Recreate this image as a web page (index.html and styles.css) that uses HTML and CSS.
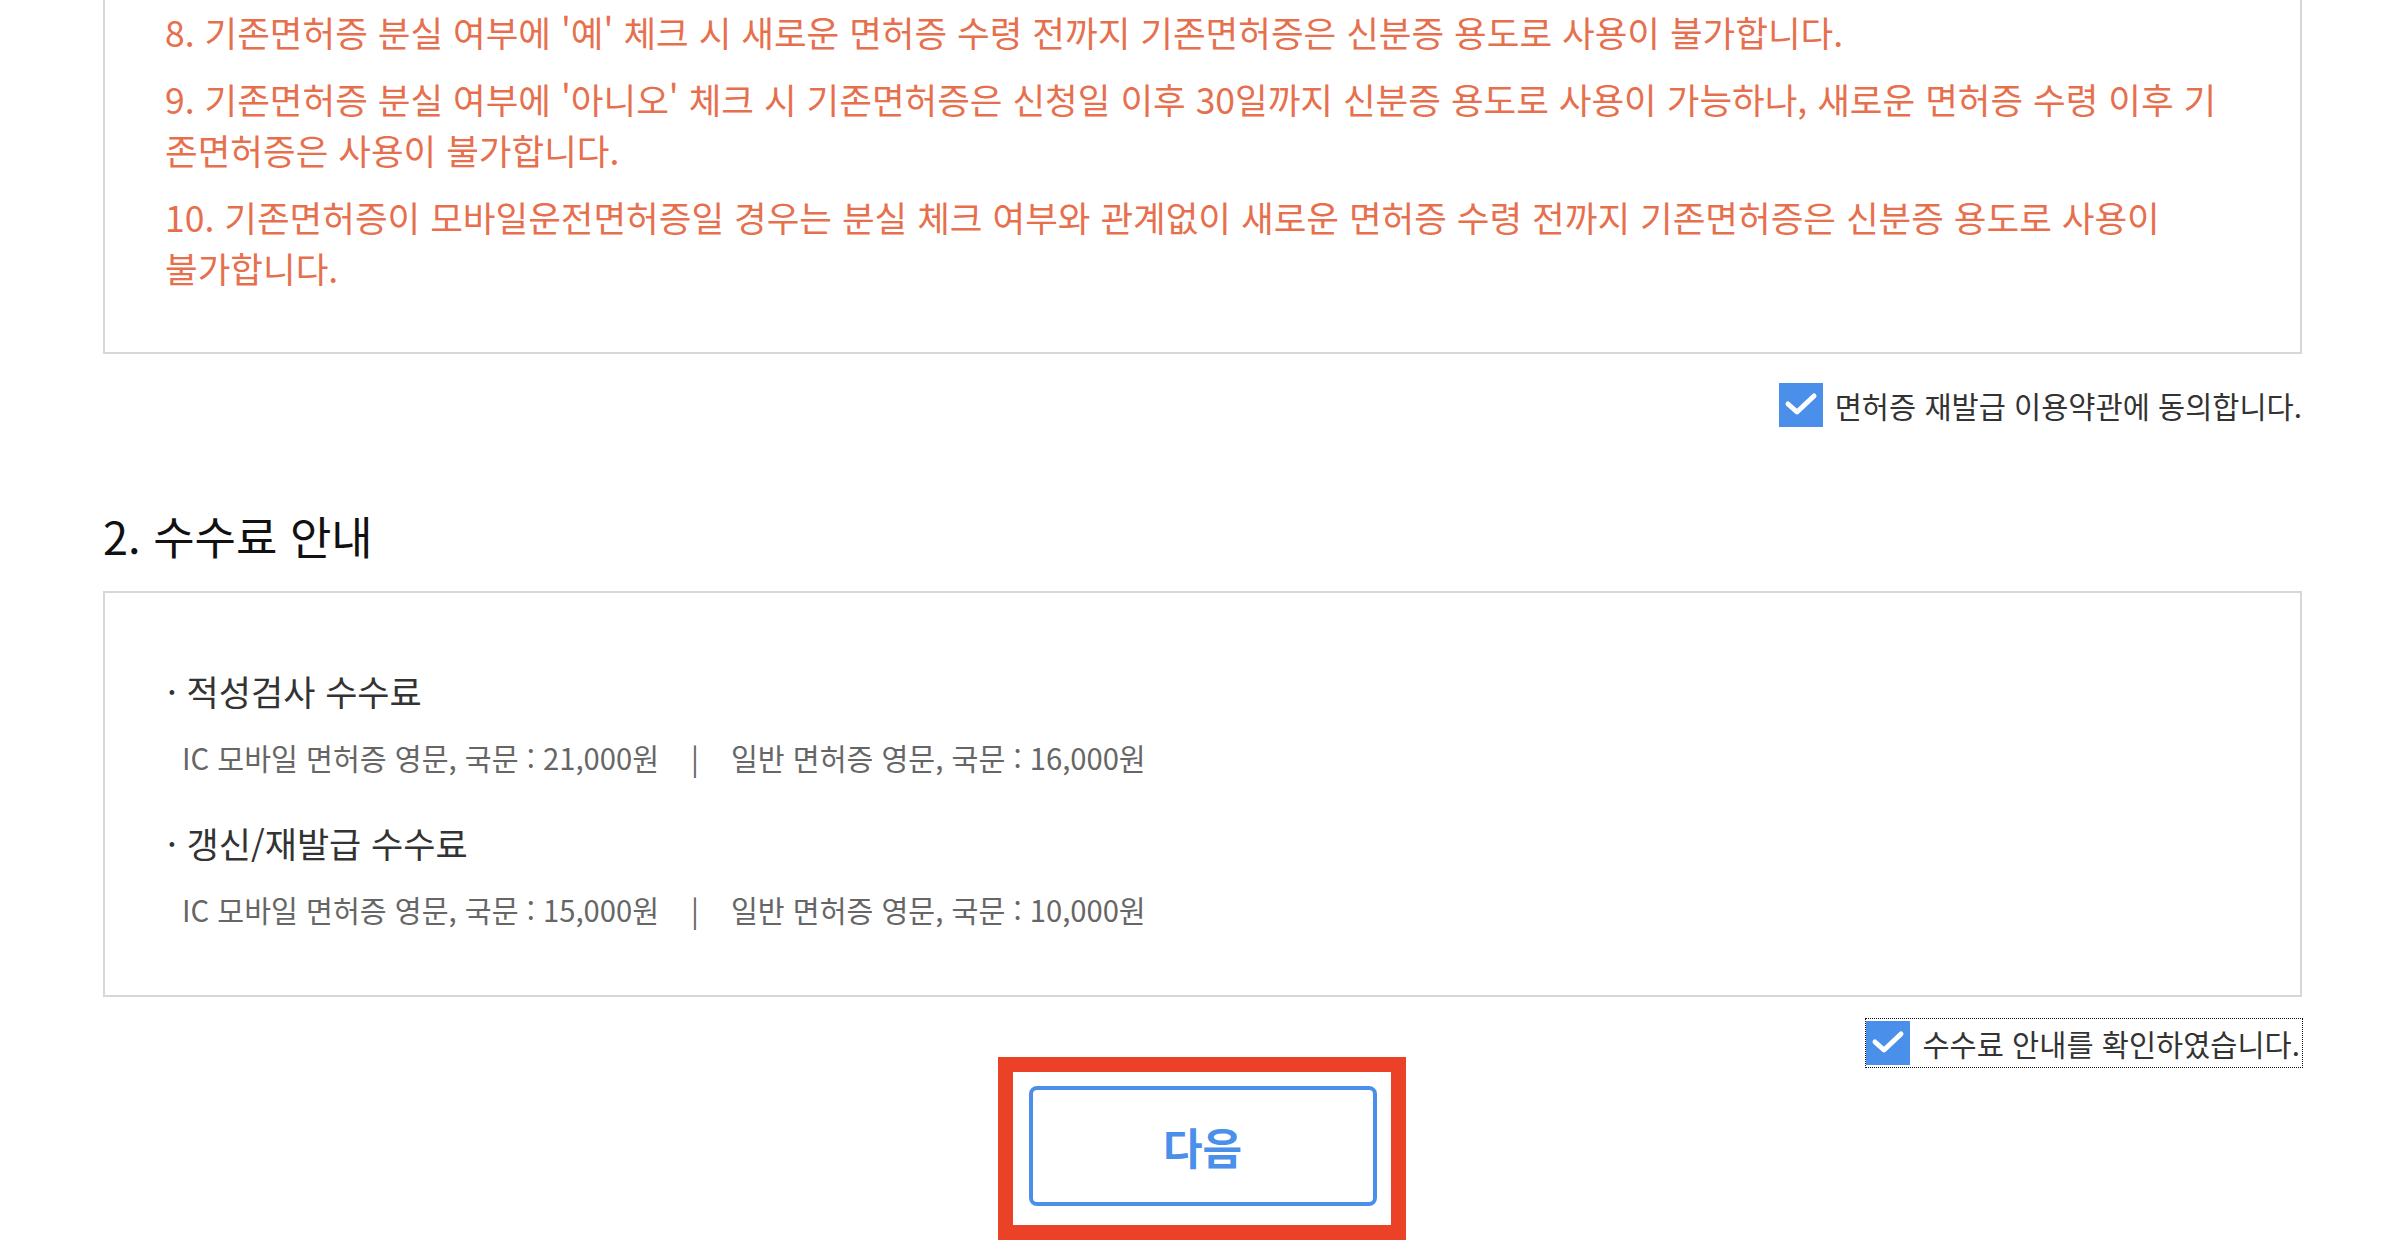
FILE: index.html
```html
<!DOCTYPE html>
<html lang="ko">
<head>
<meta charset="utf-8">
<title>면허증 재발급</title>
<link rel="stylesheet" href="styles.css">
</head>
<body>
<div class="page">
  <div class="terms-box">
    <ul class="notice">
      <li>8. 기존면허증 분실 여부에 '예' 체크 시 새로운 면허증 수령 전까지 기존면허증은 신분증 용도로 사용이 불가합니다.</li>
      <li>9. 기존면허증 분실 여부에 '아니오' 체크 시 기존면허증은 신청일 이후 30일까지 신분증 용도로 사용이 가능하나, 새로운 면허증 수령 이후 기<br>존면허증은 사용이 불가합니다.</li>
      <li>10. 기존면허증이 모바일운전면허증일 경우는 분실 체크 여부와 관계없이 새로운 면허증 수령 전까지 기존면허증은 신분증 용도로 사용이<br>불가합니다.</li>
    </ul>
  </div>

  <div class="agree-row">
    <label class="check">
      <span class="check-box"><svg viewBox="0 0 44 44" width="44" height="44"><polyline points="9,21 18,29 35,13" fill="none" stroke="#fff" stroke-width="5" stroke-linecap="round" stroke-linejoin="round"/></svg></span>
      <span class="check-text">면허증 재발급 이용약관에 동의합니다.</span>
    </label>
  </div>

  <h2 class="section-title">2. 수수료 안내</h2>

  <div class="fee-box">
    <div class="fee-group">
      <p class="fee-title">· 적성검사 수수료</p>
      <p class="fee-line">IC 모바일 면허증 영문, 국문 : 21,000원<span class="sep">|</span>일반 면허증 영문, 국문 : 16,000원</p>
    </div>
    <div class="fee-group">
      <p class="fee-title">· 갱신/재발급 수수료</p>
      <p class="fee-line">IC 모바일 면허증 영문, 국문 : 15,000원<span class="sep">|</span>일반 면허증 영문, 국문 : 10,000원</p>
    </div>
  </div>

  <div class="agree-row confirm-row">
    <label class="check focused">
      <span class="check-box"><svg viewBox="0 0 44 44" width="44" height="44"><polyline points="9,21 18,29 35,13" fill="none" stroke="#fff" stroke-width="5" stroke-linecap="round" stroke-linejoin="round"/></svg></span>
      <span class="check-text">수수료 안내를 확인하였습니다.</span>
    </label>
  </div>

  <div class="btn-row">
    <div class="btn-highlight">
      <button class="next-btn" type="button">다음</button>
    </div>
  </div>
</div>
</body>
</html>
```

FILE: styles.css
```css
html, body {
  margin: 0;
  padding: 0;
  background: #fff;
}

body {
  font-family: "Noto Sans CJK KR", "Noto Sans", sans-serif;
  color: #333;
  min-height: 1300px;
}

.page {
  margin-left: 103px;
  width: 2199px;
  padding-bottom: 80px;
}

.terms-box {
  margin-top: -31px;
  border: 2px solid #d7d7d7;
  padding: 35px 30px 59px 60px;
}

.notice {
  list-style: none;
  margin: 0;
  padding: 0;
}

.notice li {
  font-size: 35.5px;
  line-height: 51px;
  color: #e6704e;
  margin-bottom: 16px;
  white-space: nowrap;
}

.notice li:last-child {
  margin-bottom: 0;
}

.agree-row {
  display: flex;
  justify-content: flex-end;
  margin-top: 29px;
}

.check {
  display: inline-flex;
  align-items: center;
  gap: 12px;
  height: 44px;
}

.check-box {
  width: 44px;
  height: 44px;
  background: #4a90ea;
  display: block;
}

.check-box svg {
  display: block;
}

.check-text {
  font-size: 29.5px;
  line-height: 44px;
  color: #333;
}

.section-title {
  margin: 79px 0 0;
  font-size: 45px;
  line-height: 60px;
  font-weight: 400;
  color: #111;
}

.fee-box {
  margin-top: 25px;
  border: 2px solid #d7d7d7;
  padding: 74px 40px 66px 62px;
}

.fee-group + .fee-group {
  margin-top: 42px;
}

.fee-title {
  margin: 0;
  font-size: 35px;
  line-height: 48px;
  font-weight: 400;
  color: #333;
}

.fee-line {
  margin: 22px 0 0;
  padding-left: 15px;
  font-size: 29.2px;
  line-height: 40px;
  color: #666;
}

.sep {
  margin: 0 32px;
}

.confirm-row {
  margin-top: 22px;
}

.focused {
  height: 48px;
  outline: 1px dotted #111;
  padding-right: 2px;
}

.btn-row {
  display: flex;
  justify-content: center;
  margin-top: 19px;
}

.btn-highlight {
  position: relative;
}

.btn-highlight::after {
  content: "";
  position: absolute;
  top: -29px;
  left: -31px;
  right: -29px;
  bottom: -34px;
  border: 15px solid #ea4127;
  pointer-events: none;
}

.next-btn {
  display: block;
  width: 348px;
  height: 120px;
  box-sizing: border-box;
  border: 4px solid #4a90ea;
  border-radius: 8px;
  background: #fff;
  color: #4a90ea;
  font-family: "Noto Sans CJK KR", "Noto Sans", sans-serif;
  font-size: 43px;
  font-weight: 600;
  padding: 0;
  cursor: pointer;
}
```
